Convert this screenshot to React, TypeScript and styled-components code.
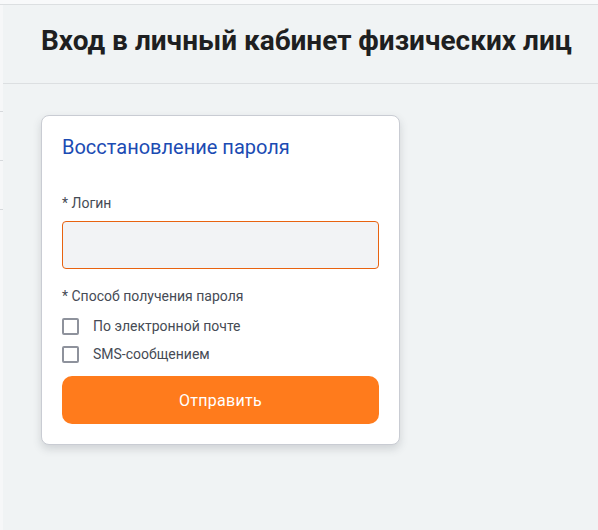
import styled, { createGlobalStyle } from "styled-components";

const Global = createGlobalStyle`
  html, body {
    margin: 0;
    padding: 0;
    background: #f0f3f4;
    font-family: Roboto, "Liberation Sans", sans-serif;
  }
  * { box-sizing: border-box; }
`;

const Page = styled.div`
  display: flex;
  flex-direction: column;
  min-height: 530px;
`;

const TopStrip = styled.div`
  height: 5px;
  background: #f8f9fa;
  border-bottom: 1px solid #dcdfe1;
`;

const Body = styled.div`
  display: flex;
  flex: 1;
`;

const SideRail = styled.div`
  width: 3px;
  background: #f6f7f8;
  display: flex;
  flex-direction: column;
  padding-top: 106px;
  gap: 48px;
`;

const RailTick = styled.div`
  height: 1px;
  background: #d6d9dc;
`;

const Main = styled.main`
  flex: 1;
  display: flex;
  flex-direction: column;
  background: #f0f3f4;
`;

const Header = styled.header`
  height: 79px;
  border-bottom: 1px solid #dcdfe1;
  display: flex;
  align-items: center;
  padding-left: 38px;
  padding-bottom: 8px;
`;

const Title = styled.h1`
  margin: 0;
  font-size: 28px;
  font-weight: 700;
  color: #1e1f21;
`;

const Content = styled.div`
  padding: 31px 0 0 38px;
`;

const Card = styled.section`
  width: 359px;
  background: #ffffff;
  border: 1px solid #c9ccd3;
  border-radius: 8px;
  box-shadow: 0 4px 8px rgba(60, 64, 80, 0.18);
  padding: 19px 20px 20px 20px;
  display: flex;
  flex-direction: column;
`;

const CardTitle = styled.h2`
  margin: 0 0 36px 0;
  font-size: 20px;
  font-weight: 400;
  color: #1b4bb3;
  line-height: 24px;
`;

const Label = styled.div`
  font-size: 14px;
  color: #464b55;
  line-height: 16px;
  margin-bottom: 10px;
`;

const Input = styled.input`
  height: 48px;
  width: 100%;
  background: #f2f3f5;
  border: 1px solid #e8620f;
  border-radius: 4px;
  outline: none;
  margin-bottom: 19px;
`;

const Options = styled.div`
  display: flex;
  flex-direction: column;
  gap: 11px;
  margin-top: 4px;
  margin-bottom: 13px;
`;

const Option = styled.label`
  display: flex;
  align-items: center;
  font-size: 14px;
  color: #464b55;
  line-height: 17px;
`;

const Box = styled.span`
  flex: none;
  width: 17px;
  height: 17px;
  margin-right: 14px;
  border: 2px solid #8e929c;
  border-radius: 2px;
  background: #fff;
`;

const Submit = styled.button`
  height: 48px;
  width: 100%;
  border: none;
  border-radius: 10px;
  background: #ff7b1c;
  color: #ffffff;
  font-family: inherit;
  font-size: 16px;
  letter-spacing: 0.3px;
  cursor: pointer;
`;

export default function App() {
  return (
    <Page>
      <Global />
      <TopStrip />
      <Body>
        <SideRail>
          <RailTick />
          <RailTick />
          <RailTick />
        </SideRail>
        <Main>
          <Header>
            <Title>Вход в личный кабинет физических лиц</Title>
          </Header>
          <Content>
            <Card>
              <CardTitle>Восстановление пароля</CardTitle>
              <Label>* Логин</Label>
              <Input />
              <Label>* Способ получения пароля</Label>
              <Options>
                <Option>
                  <Box />
                  По электронной почте
                </Option>
                <Option>
                  <Box />
                  SMS-сообщением
                </Option>
              </Options>
              <Submit>Отправить</Submit>
            </Card>
          </Content>
        </Main>
      </Body>
    </Page>
  );
}
